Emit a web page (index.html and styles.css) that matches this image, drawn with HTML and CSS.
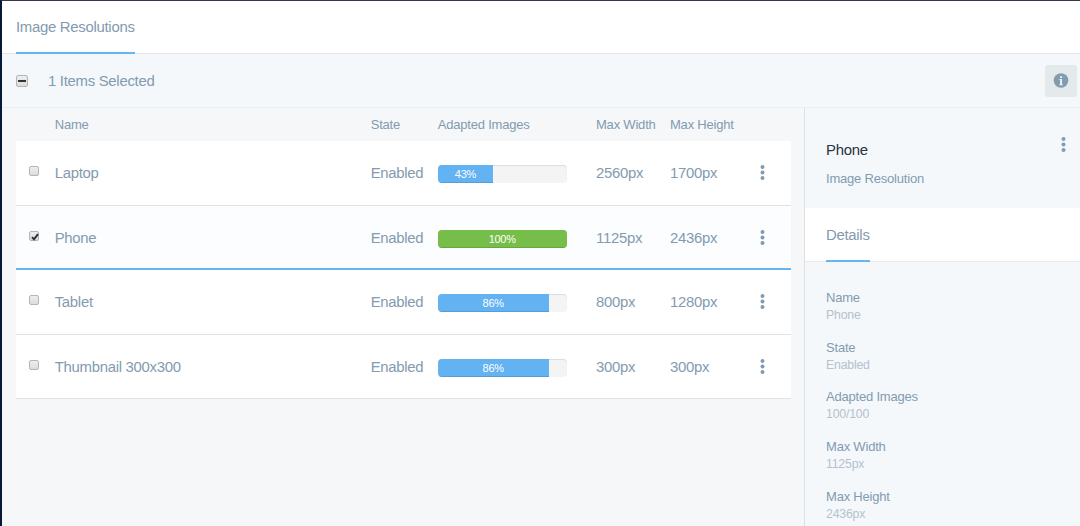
FILE: index.html
```
<!DOCTYPE html>
<html lang="en">
<head>
<meta charset="utf-8">
<title>Image Resolutions</title>
<link rel="stylesheet" href="styles.css">
</head>
<body>
<svg class="defs" width="0" height="0" aria-hidden="true">
  <symbol id="dots" viewBox="0 0 5 15"><circle cx="2.5" cy="2.1" r="2"/><circle cx="2.5" cy="7.5" r="2"/><circle cx="2.5" cy="12.9" r="2"/></symbol>
</svg>
<div class="app">
  <nav class="tabs"><a class="tab">Image Resolutions</a></nav>
  <div class="toolbar">
    <span class="box box-all"><span class="dash"></span></span>
    <span class="selected-count">1 Items Selected</span>
    <button class="info-button" aria-label="Info"><svg width="16" height="16" viewBox="0 0 16 16"><circle cx="8" cy="7.5" r="7.3" fill="#839bb0"/><path d="M7.1 3.2h2v1.8h-2zM6.4 6H9v5.2h.8v1H6.4v-1h.7V7h-.7z" fill="#eef3f6"/></svg></button>
  </div>
  <div class="content">
    <main class="list">
      <div class="grid head"><span class="name">Name</span><span>State</span><span>Adapted Images</span><span>Max Width</span><span>Max Height</span></div>
      <div class="grid row">
        <span class="box"></span><span>Laptop</span><span>Enabled</span>
        <div class="progress"><div class="bar" style="width:43%">43%</div></div>
        <span>2560px</span><span>1700px</span><svg class="dots"><use href="#dots"/></svg>
      </div>
      <div class="grid row active">
        <span class="box"><svg class="check" viewBox="0 0 10 10"><path d="M2 5.1l2 2.2L8 2.1" fill="none" stroke="#333" stroke-width="2"/></svg></span><span>Phone</span><span>Enabled</span>
        <div class="progress"><div class="bar done" style="width:100%">100%</div></div>
        <span>1125px</span><span>2436px</span><svg class="dots"><use href="#dots"/></svg>
      </div>
      <div class="grid row">
        <span class="box"></span><span>Tablet</span><span>Enabled</span>
        <div class="progress"><div class="bar" style="width:86%">86%</div></div>
        <span>800px</span><span>1280px</span><svg class="dots"><use href="#dots"/></svg>
      </div>
      <div class="grid row">
        <span class="box"></span><span>Thumbnail 300x300</span><span>Enabled</span>
        <div class="progress"><div class="bar" style="width:86%">86%</div></div>
        <span>300px</span><span>300px</span><svg class="dots"><use href="#dots"/></svg>
      </div>
    </main>
    <aside class="sidebar">
      <header class="side-head">
        <div><h1 class="title">Phone</h1><p class="subtitle">Image Resolution</p></div>
        <svg class="dots"><use href="#dots"/></svg>
      </header>
      <nav class="side-tabs"><a class="tab">Details</a></nav>
      <dl class="details">
        <dt>Name</dt><dd>Phone</dd>
        <dt>State</dt><dd>Enabled</dd>
        <dt>Adapted Images</dt><dd>100/100</dd>
        <dt>Max Width</dt><dd>1125px</dd>
        <dt>Max Height</dt><dd>2436px</dd>
      </dl>
    </aside>
  </div>
</div>
</body>
</html>
```

FILE: styles.css
```
* { box-sizing: border-box; }
body {
  margin: 0;
  font-family: "Liberation Sans", Arial, sans-serif;
  font-size: 14.9px;
  letter-spacing: -.28px;
  color: #839bb0;
  overflow: hidden;
}
.defs { display: block; }
.app {
  height: 526px;
  display: flex;
  flex-direction: column;
  border-left: 2px solid #061a38;
  border-top: 1px solid #30384a;
  background: #f5f7f9;
}
.tabs {
  height: 53px;
  flex: none;
  display: flex;
  padding-left: 14px;
  background: #fff;
  border-bottom: 1px solid #e1e7ed;
}
.tab {
  height: 53px;
  line-height: 52px;
  border-bottom: 2px solid #65b6f0;
}
.toolbar {
  height: 54px;
  flex: none;
  display: flex;
  align-items: center;
  padding: 0 3px 0 14px;
  background: #f4f8fb;
  border-bottom: 1px solid #ecf0f3;
}
.selected-count { margin-left: 20px; }
.info-button {
  width: 32px;
  height: 32px;
  margin-left: auto;
  padding: 0;
  display: grid;
  place-items: center;
  border: 0;
  border-radius: 3px;
  background: #e4e9ec;
}
.box {
  width: 10px;
  height: 10px;
  display: grid;
  place-items: center;
  border: 1px solid #b5b5b5;
  border-radius: 2px;
  background: linear-gradient(#eee, #dcdcdc);
}
.box-all { width: 12px; height: 12px; }
.dash { width: 8px; height: 2px; background: #333; }
.check { width: 10px; height: 10px; }
.content { flex: 1; min-height: 0; display: flex; }
.list { width: 802px; padding: 0 13.5px 0 14px; }
.grid {
  display: grid;
  grid-template-columns: 25.7px 316px 67px 158.3px 74px 90px 5px;
  align-items: center;
  padding-left: 13px;
}
.head { height: 33px; font-size: 13px; letter-spacing: -.2px; }
.name { grid-column: 2; }
.row {
  height: 64.6px;
  background: #fff;
  border-bottom: 1px solid #e0e3e6;
}
.row .box { margin-bottom: 3px; }
.active { padding-top: 2px; background: #fcfdfe; border-bottom: 2px solid #65b6f0; }
.progress {
  width: 129px;
  height: 18px;
  margin-top: 2px;
  overflow: hidden;
  border-radius: 4px;
  background: #f4f4f4;
  box-shadow: inset 0 1px 1px rgba(0, 0, 0, .1);
}
.bar {
  height: 18px;
  line-height: 18px;
  font-size: 11px;
  text-align: center;
  color: #fff;
  background: #63b2f1;
  box-shadow: inset 0 -1px 0 rgba(0, 0, 0, .12);
}
.done { background: #76bd49; }
.dots { width: 5px; height: 15px; fill: #839bb0; }
.sidebar {
  flex: 1;
  background: #f4f8fb;
  border-left: 1px solid #dce0e4;
}
.side-head {
  height: 100px;
  display: flex;
  justify-content: space-between;
  padding: 33px 14px 0 21px;
}
.side-head .dots { margin-top: -4px; }
.title {
  margin: 0;
  font-size: 14.9px;
  line-height: 18px;
  font-weight: 400;
  color: #283440;
}
.subtitle {
  margin: 12px 0 0;
  font-size: 13px;
  line-height: 16px;
  letter-spacing: -.2px;
}
.side-tabs {
  height: 54px;
  display: flex;
  padding-left: 21px;
  background: #fff;
  border-bottom: 1px solid #e5eaee;
}
.side-tabs .tab { height: 54px; line-height: 54px; }
.details { margin: 0; padding: 27px 0 0 21px; letter-spacing: -.2px; }
.details dt { font-size: 13px; line-height: 17px; }
.details dd {
  margin: 0 0 14.7px;
  font-size: 12.3px;
  line-height: 18px;
  color: #b5c2cd;
}
```
